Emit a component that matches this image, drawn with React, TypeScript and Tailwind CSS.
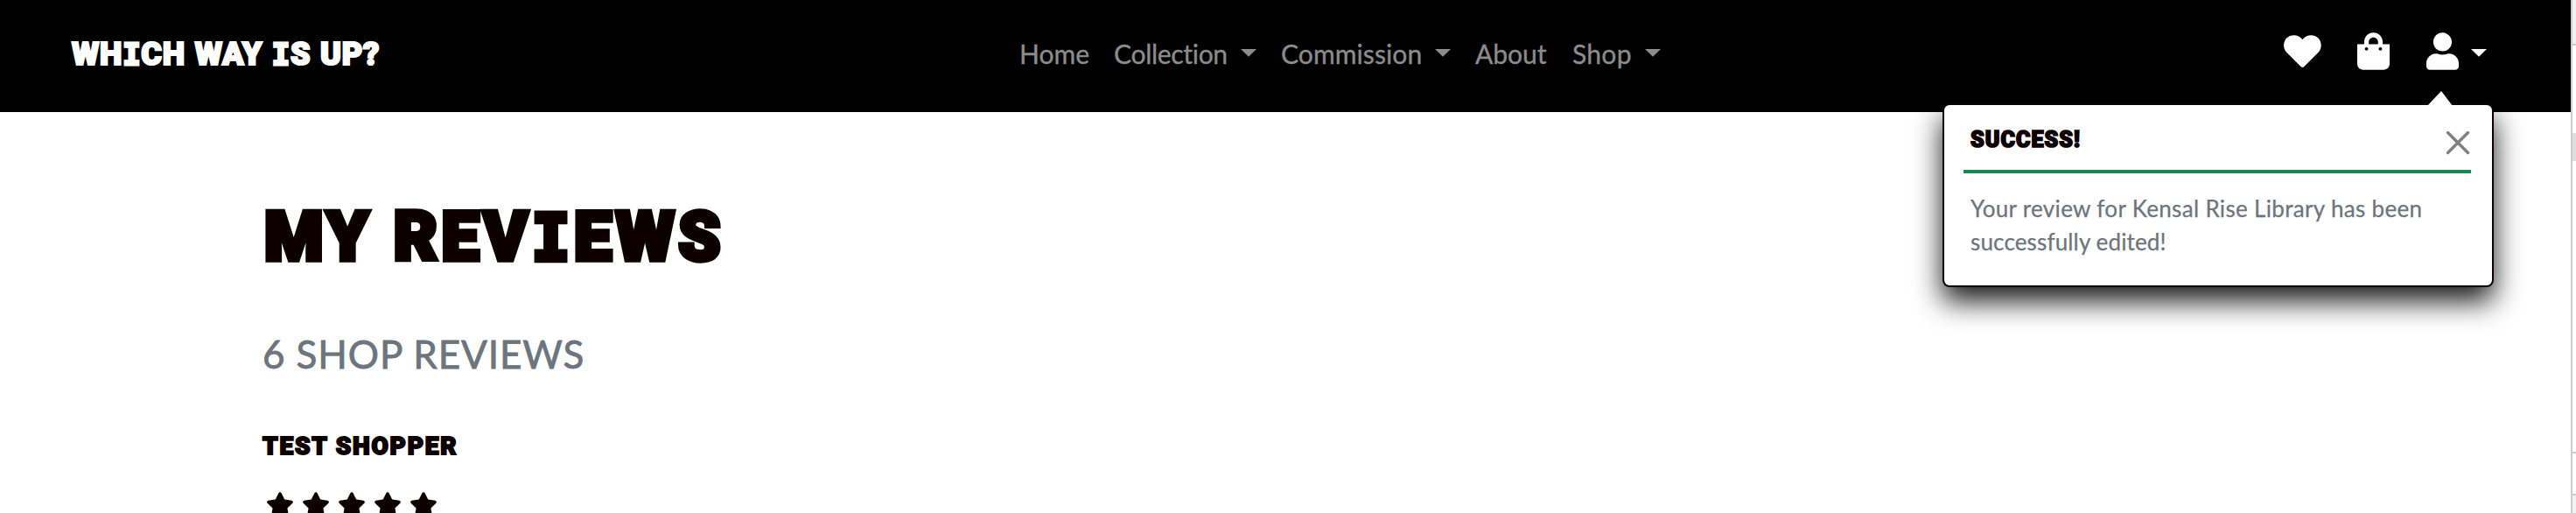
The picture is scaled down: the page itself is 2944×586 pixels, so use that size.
import type { ReactNode } from "react";
import { FaShoppingBag, FaStar, FaUser } from "react-icons/fa";

/* Heavy block lettering; the capital I carries slab serifs. */
function Display({ text, className }: { text: string; className: string }) {
  return (
    <span
      className={`block whitespace-pre font-['Roboto',sans-serif] font-black [paint-order:stroke_fill] [stroke-linejoin:round] ${className}`}
    >
      {text.split("I").map((part, i) => (
        <span key={i}>
          {i > 0 && <span className="font-['DejaVu_Sans_Mono',monospace] text-[0.94em] font-bold [-webkit-text-stroke-width:0.09em]">I</span>}
          {part}
        </span>
      ))}
    </span>
  );
}

function Caret({ className }: { className: string }) {
  return (
    <svg viewBox="0 0 18 9" className={`h-[9px] w-[18px] shrink-0 ${className}`}>
      <path d="M0 0h18L9 8.7z" fill="currentColor" />
    </svg>
  );
}

function NavItem({ children, className, caret }: { children: ReactNode; className: string; caret?: boolean }) {
  return (
    <a className={`flex shrink-0 items-center justify-between whitespace-nowrap ${className}`}>
      <span>{children}</span>
      {caret && <Caret className="-mt-[2px]" />}
    </a>
  );
}

function Header() {
  return (
    <header className="flex h-[128px] w-[2938px] items-start bg-black">
      <div className="ml-[82px] mt-[41px] w-[400px] text-white">
        <Display
          text="WHICH WAY IS UP?"
          className="text-[36px] leading-[42px] tracking-[0.8px] [word-spacing:1px] [-webkit-text-stroke:2.2px_currentColor]"
        />
      </div>
      <nav className="ml-[683px] mt-[40px] flex h-[42px] items-center font-['Lato',sans-serif] text-[30px] leading-[42px] text-[#8c8c8c] [-webkit-text-stroke:0.35px_currentColor] [font-variant-ligatures:none]">
        <NavItem className="w-[108px]">Home</NavItem>
        <NavItem className="mr-[28px] w-[163px] tracking-[-0.3px]" caret>Collection</NavItem>
        <NavItem className="mr-[28px] w-[194px] tracking-[0.1px]" caret>Commission</NavItem>
        <NavItem className="w-[111px] tracking-[0px]">About</NavItem>
        <NavItem className="w-[101px] tracking-[0.3px]" caret>Shop</NavItem>
      </nav>
      <div className="ml-[712px] mt-[37px] flex h-[44px] items-start text-white">
        <svg viewBox="0 0 43 38" className="mt-[2.7px] h-[38px] w-[43px]">
          <path
            d="M21.4 5.2C17-.9 8.400-1.200 3.600 3.300C-.9 7.600-1.200 15 3.200 19.700L19.700 36.300Q21.400 37.900 23.100 36.300L39.600 19.700C44 15 43.600 7.600 39.200 3.300C34.400-1.200 25.800-.9 21.400 5.200Z"
            fill="currentColor"
          />
        </svg>
        <FaShoppingBag className="ml-[41px] h-[43px] w-[37px]" />
        <FaUser className="ml-[42px] h-[43px] w-[37px]" />
        <Caret className="ml-[14px] mt-[19px]" />
      </div>
    </header>
  );
}

function SuccessToast() {
  return (
    <aside className="absolute left-[2220px] top-[118px] h-[210px] w-[630px] rounded-[8px] border-2 border-[#0d0000] bg-white shadow-[0_16px_32px_rgba(0,0,0,0.9)]">
      <svg viewBox="0 0 30 17" className="absolute -top-[16px] left-[552px] h-[17px] w-[30px]">
        <path d="M0 17L16 0L29 17z" fill="white" />
      </svg>
      <div className="ml-[22px] mr-[24px] flex h-[78px] justify-between border-b-4 border-[#198754] pl-[8px] pr-[1px] text-[#0d0000]">
        <Display
          text="SUCCESS!"
          className="mt-[25px] h-[30px] text-[25px] leading-[30px] tracking-[1.1px] [-webkit-text-stroke:1.7px_currentColor]"
        />
        <svg viewBox="0 0 28 28" className="mt-[29px] h-[28px] w-[28px] text-[#808080]">
          <path d="M2.500 2.500L25.500 25.500M25.500 2.500L2.500 25.500" stroke="currentColor" strokeWidth="3.400" strokeLinecap="round" />
        </svg>
      </div>
      <p className="ml-[30px] mt-[22px] font-['Lato',sans-serif] text-[26px] leading-[37.800px] tracking-[0.330px] text-[#6c757d] [-webkit-text-stroke:0.25px_currentColor] [font-variant-ligatures:none]">
        Your review for Kensal Rise Library has been
        <br />
        <span className="tracking-[0.150px]">successfully edited!</span>
      </p>
    </aside>
  );
}

function Reviews() {
  return (
    <main className="pl-[300px] text-[#0d0000]">
      <h1 className="pt-[94px]">
        <Display
          text="MY REVIEWS"
          className="ml-[2px] h-[98px] text-[77px] leading-[98px] tracking-[4.600px] [-webkit-text-stroke:5.500px_currentColor]"
        />
      </h1>
      <h2 className="mt-[58px] h-[52px] whitespace-nowrap font-['Lato',sans-serif] text-[44px] leading-[52px] tracking-[0.900px] text-[#6c757d] [-webkit-text-stroke:0.8px_currentColor]">
        6 SHOP REVIEWS
      </h2>
      <Display
        text="TEST SHOPPER"
        className="mt-[63px] h-[34px] text-[28px] leading-[34px] tracking-[1.800px] [-webkit-text-stroke:1.900px_currentColor]"
      />
      <div className="ml-[4px] mt-[35px] flex gap-[9px]">
        {[1, 2, 3, 4, 5].map((n) => (
          <FaStar key={n} className="h-[29px] w-[32px]" />
        ))}
      </div>
    </main>
  );
}

function PageEdge() {
  return (
    <div className="flex h-full w-[6px] flex-col border-l-2 border-[#cbcbd1] bg-white">
      <div className="h-[52px] border-b-2 border-[#cbcbd1] bg-[#f1f1f4]" />
      <div className="mt-[100px] h-[32px] bg-[#dedede]" />
      <div className="mt-[332px] h-[2px] bg-[#cccccc]" />
      <div className="mt-[46px] h-[22px] border-t-2 border-[#cbcbd1] bg-[#f1f1f4]" />
    </div>
  );
}

export default function App() {
  return (
    <div className="relative flex h-[586px] w-[2944px] overflow-hidden bg-white">
      <div className="w-[2938px]">
        <Header />
        <Reviews />
      </div>
      <PageEdge />
      <SuccessToast />
    </div>
  );
}
